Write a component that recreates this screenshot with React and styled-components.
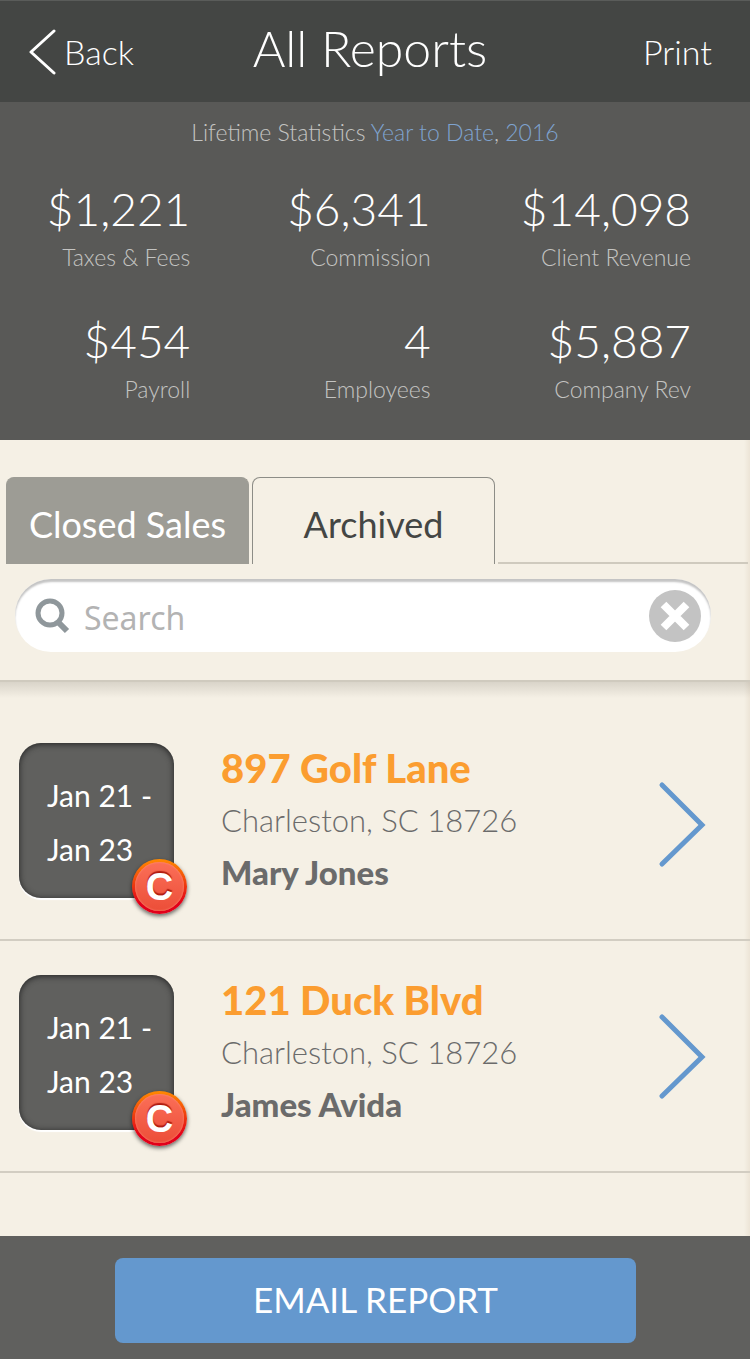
import { useState } from "react";
import styled, { createGlobalStyle } from "styled-components";

const stats = [
  { label: "Taxes & Fees", value: "$1,221" },
  { label: "Commission", value: "$6,341" },
  { label: "Client Revenue", value: "$14,098" },
  { label: "Payroll", value: "$454" },
  { label: "Employees", value: "4" },
  { label: "Company Rev", value: "$5,887" },
];

const reports = [
  { id: 1, from: "Jan 21", to: "Jan 23", address: "897 Golf Lane", city: "Charleston, SC 18726", client: "Mary Jones" },
  { id: 2, from: "Jan 21", to: "Jan 23", address: "121 Duck Blvd", city: "Charleston, SC 18726", client: "James Avida" },
];

const tabs = ["Closed Sales", "Archived"];

function App() {
  const [activeTab, setActiveTab] = useState("Archived");
  const [keyword, setKeyword] = useState("");

  return (
    <>
      <GlobalStyle />
      <Page>
        <Header>
          <BackBtn type="button">
            <svg width="28" height="48" viewBox="0 0 28 48" fill="none" stroke="#fff" strokeWidth="3" strokeLinecap="round" strokeLinejoin="round" aria-hidden="true">
              <path d="M26 3 L3 24 L26 45" />
            </svg>
            Back
          </BackBtn>
          <Title>All Reports</Title>
          <PrintBtn type="button">Print</PrintBtn>
        </Header>

        <Stats>
          <Period>
            Lifetime Statistics <a href="#ytd">Year to Date</a>, <a href="#2016">2016</a>
          </Period>
          <StatGrid>
            {stats.map((stat) => (
              <Stat key={stat.label}>
                <StatLabel>{stat.label}</StatLabel>
                <StatValue>{stat.value}</StatValue>
              </Stat>
            ))}
          </StatGrid>
        </Stats>

        <Main>
          <TabBar role="tablist">
            {tabs.map((tab) => (
              <Tab
                key={tab}
                type="button"
                role="tab"
                aria-selected={activeTab === tab}
                $active={activeTab === tab}
                onClick={() => setActiveTab(tab)}
              >
                {tab}
              </Tab>
            ))}
            <TabLine />
          </TabBar>

          <SearchArea>
            <SearchBox>
              <svg width="36" height="38" viewBox="0 0 36 38" fill="none" stroke="#8f979b" strokeWidth="5" aria-hidden="true">
                <circle cx="16" cy="16" r="12" />
                <path d="M24 25 L33 34" strokeWidth="6" />
              </svg>
              <SearchInput
                type="text"
                aria-label="Search"
                placeholder="Search"
                value={keyword}
                onChange={(e) => setKeyword(e.target.value)}
              />
              <ClearBtn type="button" aria-label="Clear search" onClick={() => setKeyword("")}>
                <svg width="52" height="52" viewBox="0 0 52 52" aria-hidden="true">
                  <circle cx="26" cy="26" r="26" fill="#c3c3c3" />
                  <path d="M14.500 14.500 L37.500 37.500 M37.500 14.500 L14.500 37.500" stroke="#fff" strokeWidth="8" />
                </svg>
              </ClearBtn>
            </SearchBox>
          </SearchArea>

          <ReportList>
            {reports.map((report) => (
              <li key={report.id}>
                <ReportLink href={"#report-" + report.id}>
                  <DateTile>
                    <span>{report.from} -</span>
                    <span>{report.to}</span>
                    <Badge>C</Badge>
                  </DateTile>
                  <ReportInfo>
                    <Address>{report.address}</Address>
                    <City>{report.city}</City>
                    <Client>{report.client}</Client>
                  </ReportInfo>
                  <svg width="50" height="96" viewBox="0 0 50 96" fill="none" stroke="#6498ce" strokeWidth="5" strokeLinecap="round" strokeLinejoin="miter" aria-hidden="true">
                    <path d="M5 13 L45 53 L5 92" />
                  </svg>
                </ReportLink>
              </li>
            ))}
          </ReportList>
        </Main>

        <Footer>
          <EmailBtn type="button">EMAIL REPORT</EmailBtn>
        </Footer>
      </Page>
    </>
  );
}

const GlobalStyle = createGlobalStyle`
  * {
    box-sizing: border-box;
  }

  body {
    margin: 0;
    font-family: Lato, "Liberation Sans", sans-serif;
    font-weight: 300;
    background-color: #f5f0e5;
  }

  button,
  input {
    margin: 0;
    padding: 0;
    border: 0;
    background: none;
    font: inherit;
    color: inherit;
  }

  button {
    cursor: pointer;
  }

  a {
    text-decoration: none;
  }

  svg {
    display: block;
    flex-shrink: 0;
  }
`

const Page = styled.div`
  display: flex;
  flex-direction: column;
  min-height: 100vh;
`

const Header = styled.header`
  display: grid;
  grid-template-columns: 1fr auto 1fr;
  align-items: center;
  height: 102px;
  padding: 0 38px 0 28px;
  border-top: 1px solid #5a5c5a;
  background-color: #444644;
  color: #fff;
`

const BackBtn = styled.button`
  display: flex;
  gap: 8px;
  align-items: center;
  justify-self: start;
  font-size: 34px;
  line-height: 48px;
`

const Title = styled.h1`
  margin: 0;
  padding-bottom: 8px;
  font-size: 50px;
  font-weight: 300;
  line-height: 60px;
`

const PrintBtn = styled.button`
  justify-self: end;
  font-size: 34px;
  line-height: 48px;
`

const Stats = styled.section`
  padding: 15px 0 33px;
  background-color: #595957;
`

const Period = styled.p`
  margin: 0 0 32px;
  font-size: 23px;
  line-height: 30px;
  text-align: center;
  color: #c4c4c2;

  a {
    color: #7fa3cf;
  }
`

const StatGrid = styled.dl`
  display: grid;
  grid-template-columns: 19fr 24fr 26fr;
  row-gap: 36px;
  margin: 0;
  padding-right: 59px;
`

const Stat = styled.div`
  display: flex;
  flex-direction: column-reverse;
  text-align: right;
`

const StatLabel = styled.dt`
  font-size: 23px;
  line-height: 36px;
  color: #c4c4c2;
`

const StatValue = styled.dd`
  margin: 0;
  font-size: 46px;
  line-height: 60px;
  color: #fff;
`

const Main = styled.main`
  flex: 1;
  padding-bottom: 63px;
  background: linear-gradient(to left, #ece4d6, #f5f0e5 6px);
`

const TabBar = styled.div`
  display: flex;
  gap: 3px;
  padding: 37px 2px 0 6px;
`

const Tab = styled.button`
  flex: 0 1 243px;
  height: 87px;
  padding-top: 5px;
  border: 1px solid ${(props) => (props.$active ? "#8d8d87" : "#9d9c95")};
  border-bottom: 0;
  border-radius: 8px 8px 0 0;
  background-color: ${(props) => (props.$active ? "transparent" : "#9d9c95")};
  font-size: 36px;
  font-weight: 400;
  color: ${(props) => (props.$active ? "#444644" : "#fff")};
`

const TabLine = styled.div`
  flex: 1;
  border-bottom: 2px solid #cfcabe;
`

const SearchArea = styled.div`
  padding: 15px 39px 28px 15px;
  border-bottom: 2px solid #cfcabe;
`

const SearchBox = styled.div`
  display: flex;
  align-items: center;
  height: 73px;
  padding: 1px 10px 0 19px;
  border-radius: 36px;
  background-color: #fff;
  box-shadow: inset 0 3px 2px #c4c4c4;
`

const SearchInput = styled.input`
  flex: 1;
  min-width: 0;
  padding: 2px 14px 0;
  outline: none;
  font-family: "Noto Sans", sans-serif;
  font-size: 32px;
  font-weight: 400;
  color: #595957;

  &::placeholder {
    opacity: 1;
    color: #b3b3b3;
  }
`

const ClearBtn = styled.button`
  border-radius: 50%;
`

const ReportList = styled.ul`
  margin: 0;
  padding: 27px 0 0;
  background: linear-gradient(rgba(90, 85, 75, 0.18), rgba(90, 85, 75, 0) 16px);
  list-style: none;
`

const ReportLink = styled.a`
  display: flex;
  align-items: center;
  height: 232px;
  padding: 0 43px 8px 19px;
  border-bottom: 2px solid #d2cdc2;
`

const DateTile = styled.div`
  position: relative;
  display: flex;
  flex-direction: column;
  justify-content: center;
  flex-shrink: 0;
  width: 155px;
  height: 155px;
  padding: 4px 0 0 28px;
  border-radius: 22px;
  background-color: #60605e;
  box-shadow: inset 0 1px 6px #222, 0 2px 1px #fff;
  font-size: 30px;
  font-weight: 400;
  line-height: 54px;
  color: #fff;
`

const Badge = styled.span`
  position: absolute;
  right: -13px;
  bottom: -16px;
  width: 55px;
  height: 55px;
  border: 3px solid transparent;
  border-radius: 50%;
  background:
    linear-gradient(#fb6f58, #ec4e38) padding-box,
    linear-gradient(#ff8a00, #e2001a 80%) border-box;
  box-shadow: 0 2px 4px rgba(0, 0, 0, 0.6), inset 0 0 2px #ff9a80;
  font-family: "Liberation Sans", sans-serif;
  font-size: 38px;
  font-weight: 700;
  line-height: 51px;
  text-align: center;
  text-shadow: 0 -2px 1px #b01c10;
`

const ReportInfo = styled.div`
  flex: 1;
  padding-left: 47px;
  line-height: 52px;
  color: #6b6b6b;
`

const Address = styled.h2`
  margin: 0;
  font-size: 40px;
  font-weight: 900;
  line-height: 52px;
  color: #fb9d30;
`

const City = styled.p`
  margin: 0;
  font-size: 31px;
`

const Client = styled.p`
  margin: 0;
  font-size: 33px;
  font-weight: 900;
`

const Footer = styled.footer`
  display: flex;
  justify-content: center;
  padding: 22px 114px 16px 115px;
  background-color: #60605e;
`

const EmailBtn = styled.button`
  width: 100%;
  height: 85px;
  padding-bottom: 4px;
  border-radius: 8px;
  background-color: #6498ce;
  font-size: 35px;
  font-weight: 400;
  color: #fff;
`

export default App;
